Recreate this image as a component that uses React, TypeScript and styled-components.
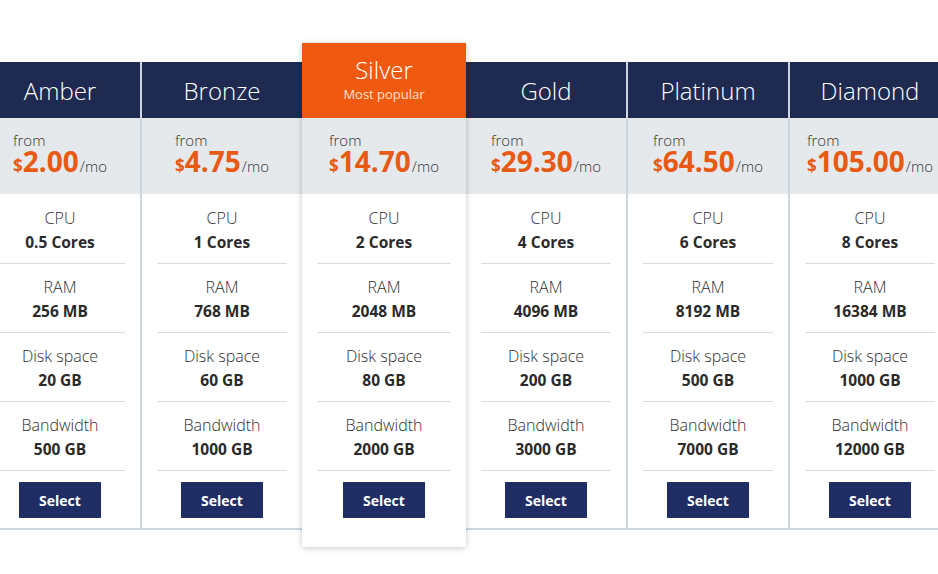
import React from "react";
import styled, { createGlobalStyle, css } from "styled-components";

const GlobalStyle = createGlobalStyle`
  html, body { margin: 0; padding: 0; background: #ffffff; overflow: hidden; }
  body { font-family: "Open Sans", "Liberation Sans", Arial, sans-serif; color: #333; }
`;

type Plan = {
  name: string;
  price: string;
  cpu: string;
  ram: string;
  disk: string;
  bw: string;
  featured?: boolean;
};

const plans: Plan[] = [
  { name: "Amber", price: "2.00", cpu: "0.5 Cores", ram: "256 MB", disk: "20 GB", bw: "500 GB" },
  { name: "Bronze", price: "4.75", cpu: "1 Cores", ram: "768 MB", disk: "60 GB", bw: "1000 GB" },
  { name: "Silver", price: "14.70", cpu: "2 Cores", ram: "2048 MB", disk: "80 GB", bw: "2000 GB", featured: true },
  { name: "Gold", price: "29.30", cpu: "4 Cores", ram: "4096 MB", disk: "200 GB", bw: "3000 GB" },
  { name: "Platinum", price: "64.50", cpu: "6 Cores", ram: "8192 MB", disk: "500 GB", bw: "7000 GB" },
  { name: "Diamond", price: "105.00", cpu: "8 Cores", ram: "16384 MB", disk: "1000 GB", bw: "12000 GB" },
];

const Page = styled.div`
  width: 938px;
  height: 574px;
  overflow: hidden;
  position: relative;
`;

const Table = styled.div`
  display: flex;
  align-items: flex-start;
  margin-left: -20px;
  padding-top: 43px;
  width: 972px;
`;

const Column = styled.div<{ $featured?: boolean }>`
  width: 162px;
  flex: 0 0 162px;
  box-sizing: border-box;
  display: flex;
  flex-direction: column;
  background: #ffffff;
  ${(p) =>
    p.$featured
      ? css`
          width: 164px;
          flex: 0 0 164px;
          margin-left: -2px;
          padding-bottom: 19px;
          position: relative;
          z-index: 2;
          box-shadow: 0 1px 6px rgba(0, 0, 0, 0.22);
        `
      : css`
          margin-top: 19px;
          border-right: 2px solid #cbd6df;
          border-bottom: 2px solid #cbd6df;
        `}
`;

const Header = styled.div<{ $featured?: boolean }>`
  display: flex;
  flex-direction: column;
  align-items: center;
  color: #ffffff;
  box-sizing: border-box;
  ${(p) =>
    p.$featured
      ? css`
          height: 75px;
          background: #f05a10;
          padding-top: 12px;
        `
      : css`
          height: 56px;
          background: #1e2a50;
          padding-top: 2px;
          justify-content: center;
        `}
`;

const Title = styled.div<{ $featured?: boolean }>`
  font-size: 24px;
  font-weight: 300;
  line-height: ${(p) => (p.$featured ? "30px" : "54px")};
`;

const Subtitle = styled.div`
  font-size: 13px;
  line-height: 18px;
  color: #fde3cf;
`;

const PriceBox = styled.div`
  height: 76px;
  background: #e5e9ec;
  display: flex;
  justify-content: center;
  padding-top: 14px;
  box-sizing: border-box;
`;

const PriceInner = styled.div`
  display: flex;
  flex-direction: column;
  align-items: flex-start;
`;

const From = styled.div`
  font-size: 15px;
  font-weight: 300;
  line-height: 16px;
  color: #333;
`;

const PriceLine = styled.div`
  line-height: 26px;
  white-space: nowrap;
`;

const Dollar = styled.span`
  font-size: 17px;
  font-weight: 700;
  color: #e85a14;
`;

const Amount = styled.span`
  font-size: 28px;
  font-weight: 700;
  color: #e85a14;
`;

const Per = styled.span`
  font-size: 15px;
  font-weight: 300;
  color: #333;
  margin-left: 1px;
`;

const Rows = styled.div`
  padding-top: 1px;
  display: flex;
  flex-direction: column;
`;

const Row = styled.div`
  margin: 0 15px;
  padding: 11px 0 9px;
  height: 69px;
  box-sizing: border-box;
  border-bottom: 1px solid #d6dadd;
  text-align: center;
`;

const Label = styled.div`
  font-size: 16px;
  font-weight: 300;
  line-height: 24px;
  color: #2e2e2e;
`;

const Value = styled.div`
  font-size: 15.5px;
  line-height: 24px;
  font-weight: 700;
  color: #2a2a2a;
`;

const Footer = styled.div`
  display: flex;
  justify-content: center;
  padding: 11px 0 10px;
`;

const SelectButton = styled.button`
  width: 82px;
  height: 36px;
  border: none;
  background: #1f2d64;
  color: #ffffff;
  font-family: "Open Sans", "Liberation Sans", Arial, sans-serif;
  font-size: 14px;
  font-weight: 700;
  cursor: pointer;
  padding: 0;
`;

export default function App() {
  return (
    <Page>
      <GlobalStyle />
      <Table>
        {plans.map((p) => (
          <Column key={p.name} $featured={p.featured}>
            <Header $featured={p.featured}>
              <Title $featured={p.featured}>{p.name}</Title>
              {p.featured && <Subtitle>Most popular</Subtitle>}
            </Header>
            <PriceBox>
              <PriceInner>
                <From>from</From>
                <PriceLine>
                  <Dollar>$</Dollar>
                  <Amount>{p.price}</Amount>
                  <Per>/mo</Per>
                </PriceLine>
              </PriceInner>
            </PriceBox>
            <Rows>
              <Row>
                <Label>CPU</Label>
                <Value>{p.cpu}</Value>
              </Row>
              <Row>
                <Label>RAM</Label>
                <Value>{p.ram}</Value>
              </Row>
              <Row>
                <Label>Disk space</Label>
                <Value>{p.disk}</Value>
              </Row>
              <Row>
                <Label>Bandwidth</Label>
                <Value>{p.bw}</Value>
              </Row>
            </Rows>
            <Footer>
              <SelectButton>Select</SelectButton>
            </Footer>
          </Column>
        ))}
      </Table>
    </Page>
  );
}
